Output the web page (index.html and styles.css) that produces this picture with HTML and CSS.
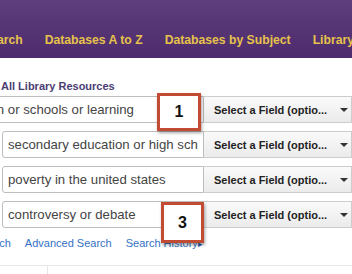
FILE: index.html
```html
<!DOCTYPE html>
<html lang="en">
<head>
    <meta charset="UTF-8">
    <meta name="viewport" content="width=device-width, initial-scale=1.0">
    <title>Library Search</title>
    <link rel="stylesheet" href="styles.css">
</head>
<body>

    <header class="topbar">
        <nav class="main-nav">
            <a href="#">Search</a>
            <a href="#">Databases A to Z</a>
            <a href="#">Databases by Subject</a>
            <a href="#">Library Services</a>
        </nav>
    </header>

    <main class="search">
        <div class="search-title">All Library Resources</div>

        <div class="row first">
            <input class="term" type="text" value="education or schools or learning">
            <div class="field">Select a Field (optio...<span class="caret"></span></div>
        </div>
        <div class="row">
            <input class="term" type="text" value="secondary education or high school">
            <div class="field">Select a Field (optio...<span class="caret"></span></div>
        </div>
        <div class="row">
            <input class="term" type="text" value="poverty in the united states">
            <div class="field">Select a Field (optio...<span class="caret"></span></div>
        </div>
        <div class="row">
            <input class="term" type="text" value="controversy or debate">
            <div class="field">Select a Field (optio...<span class="caret"></span></div>
        </div>

        <div class="links">
            <a href="#">Search</a>
            <a href="#">Advanced Search</a>
            <a href="#">Search History <span class="arrow">&#9656;</span></a>
        </div>

        <div class="bottom-bar"><div class="bottom-cell"></div></div>

        <!-- step markers laid over the form -->
        <div class="step step-1">1</div>
        <div class="step step-3">3</div>
    </main>

</body>
</html>
```

FILE: styles.css
```css
* {
    box-sizing: border-box;
    margin: 0;
    padding: 0;
}

body {
    font-family: "Liberation Sans", Arial, sans-serif;
    background: #fff;
    color: #333;
    width: 352px;
    height: 274px;
    overflow: hidden;
}

/* --- header --- */
.topbar {
    height: 58px;
    background: linear-gradient(#5e3e7c, #4d2b6d);
    display: flex;
    align-items: flex-end;
    padding-bottom: 11px;
}

.main-nav {
    display: flex;
    gap: 22px;
    margin-left: -18px;
    white-space: nowrap;
}

.main-nav a {
    color: #e6c24c;
    font-size: 12.2px;
    font-weight: bold;
    line-height: 14px;
    text-decoration: none;
}

/* --- search form --- */
.search {
    position: relative;
    padding-top: 21px;
}

.search-title {
    margin: 0 0 3px 1px;
    font-size: 11px;
    font-weight: bold;
    line-height: 14px;
    color: #4a3d72;
}

.row {
    display: flex;
    height: 27px;
    margin-bottom: 8px;
    margin-left: 2px;
    white-space: nowrap;
}

.row.first {
    margin-left: -59px;
}

.term {
    flex: 1;
    min-width: 0;
    height: 27px;
    border: 1px solid #bdbdbd;
    border-radius: 3px 0 0 3px;
    padding: 0 5px;
    font-family: "Liberation Sans", Arial, sans-serif;
    font-size: 13.2px;
    color: #444;
    background: #fff;
    outline: none;
}

.field {
    flex: 0 0 148px;
    display: flex;
    align-items: center;
    height: 27px;
    padding-left: 10px;
    border: 1px solid #cdcdcd;
    border-left: none;
    background: linear-gradient(#fafafa, #ebebeb);
    font-size: 11px;
    font-weight: bold;
    color: #222;
}

.caret {
    margin-left: 13px;
    border-left: 4px solid transparent;
    border-right: 4px solid transparent;
    border-top: 4px solid #333;
}

.links {
    display: flex;
    gap: 14px;
    margin: 5px 0 0 -24px;
    white-space: nowrap;
}

.links a {
    font-size: 11px;
    line-height: 14px;
    color: #3471c4;
    text-decoration: none;
}

.links .arrow {
    font-size: 9px;
    color: #2a5ea8;
    margin-left: -3px;
}

.bottom-bar {
    margin-top: 14px;
    height: 12px;
    border-top: 1px solid #e6e6e6;
}

.bottom-cell {
    width: 48px;
    height: 100%;
    border-right: 1px solid #e6e6e6;
}

/* --- step markers --- */
.step {
    position: absolute;
    display: flex;
    align-items: center;
    justify-content: center;
    background: #fff;
    border: 3px solid #c24b33;
    box-shadow: 1px 2px 3px rgba(0, 0, 0, 0.35);
    font-size: 16px;
    font-weight: bold;
    color: #111;
}

.step-1 {
    left: 157px;
    top: 35px;
    width: 44px;
    height: 38px;
}

.step-3 {
    left: 161px;
    top: 144px;
    width: 43px;
    height: 41px;
}
```
